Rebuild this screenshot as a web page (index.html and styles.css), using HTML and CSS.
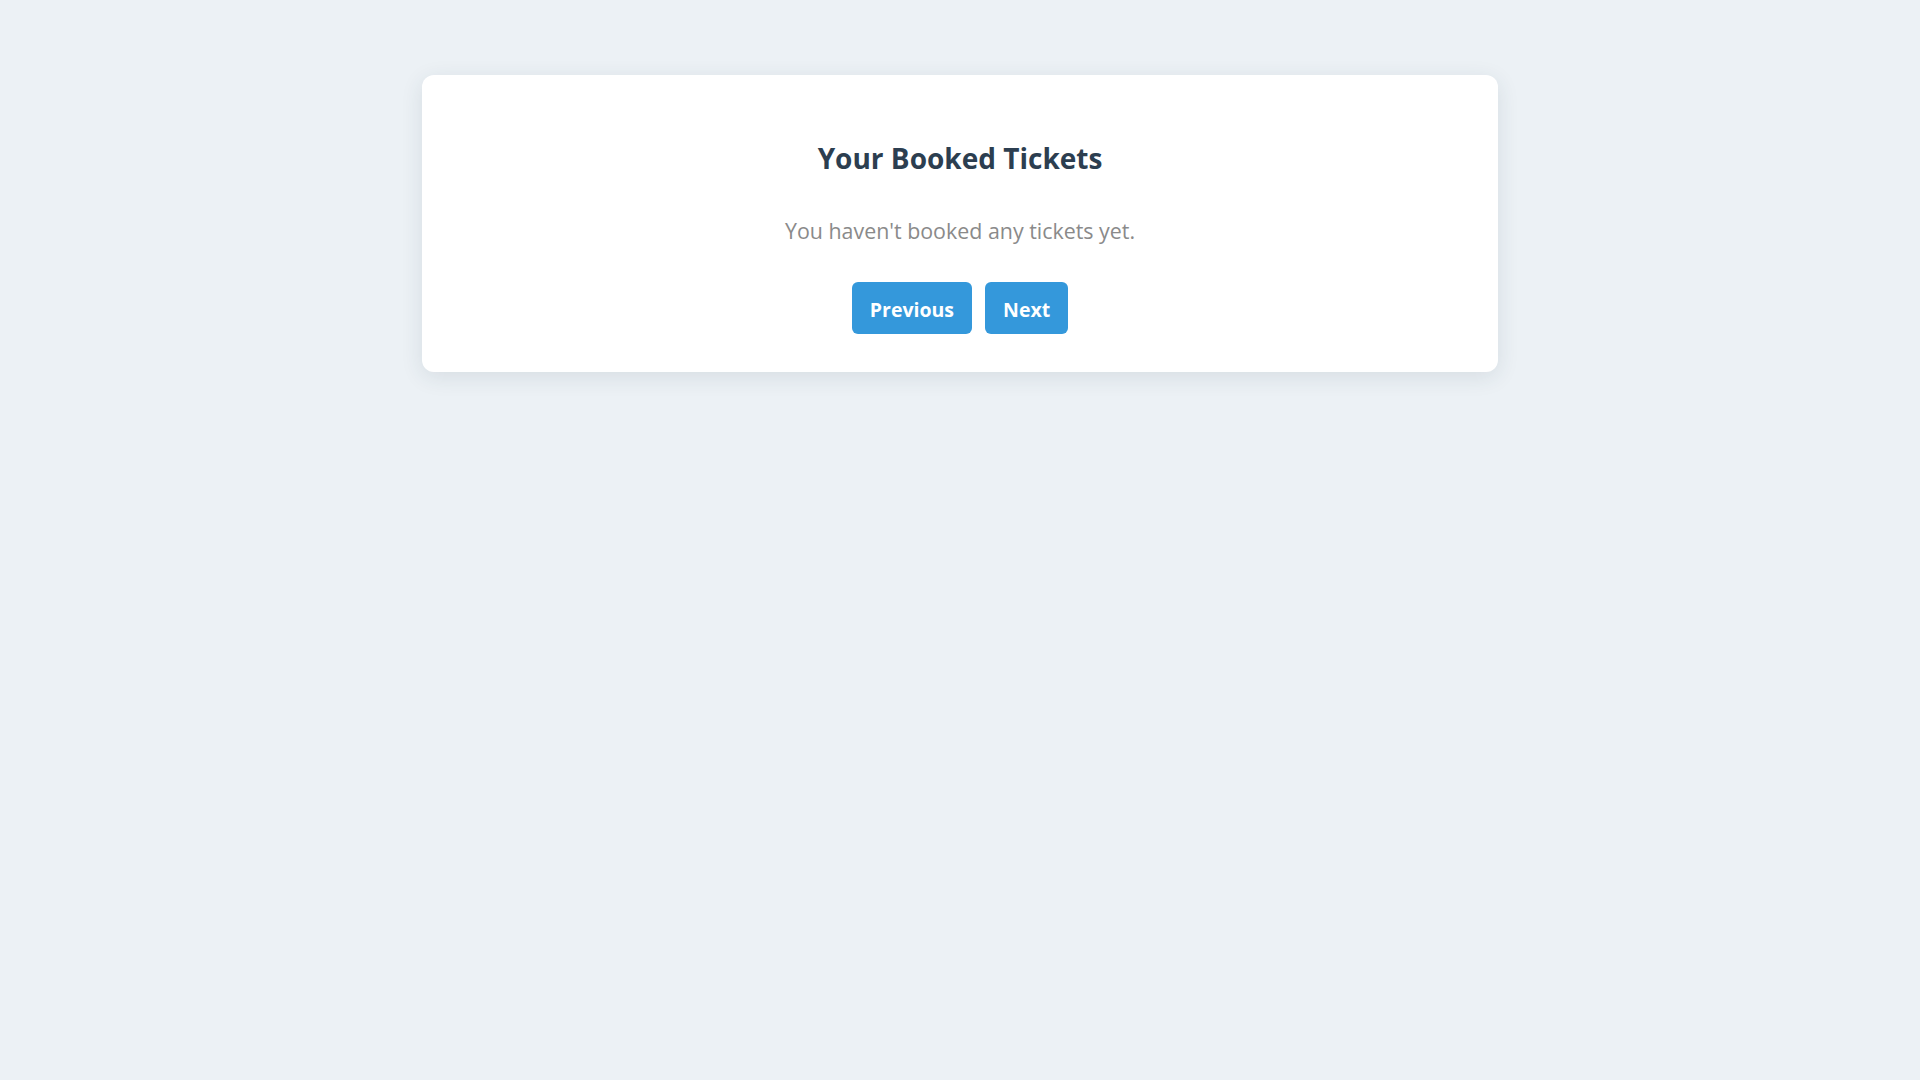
FILE: index.html
```html
<!DOCTYPE html>
<html lang="en">
<head>
<meta charset="UTF-8">
<title>Your Booked Tickets</title>
<link rel="stylesheet" href="styles.css">
</head>
<body>
<main class="card">
  <h2 class="title">Your Booked Tickets</h2>
  <p class="empty">You haven't booked any tickets yet.</p>
  <div class="pager">
    <button class="btn">Previous</button>
    <button class="btn">Next</button>
  </div>
</main>
</body>
</html>
```
FILE: styles.css
```css
html, body {
  margin: 0;
  padding: 0;
}
body {
  background: #ecf1f5;
  font-family: "Open Sans", "Noto Sans", sans-serif;
  min-height: 1080px;
  padding-top: 75px;
  box-sizing: border-box;
}
.card {
  width: 1076px;
  margin: 0 auto;
  box-sizing: border-box;
  background: #fff;
  border-radius: 12px;
  box-shadow: 0 5px 22px rgba(40, 60, 80, 0.11);
  padding: 63px 40px 38px;
  text-align: center;
}
.title {
  margin: 0;
  font-size: 28px;
  line-height: 40px;
  font-weight: 700;
  color: #2c3e50;
}
.empty {
  margin: 38px 0 0;
  font-size: 21.4px;
  line-height: 30px;
  color: #8a8a8a;
}
.pager {
  margin-top: 36px;
  display: flex;
  justify-content: center;
  gap: 13px;
}
.btn {
  border: none;
  background: #3498db;
  color: #fff;
  font-family: inherit;
  font-size: 19.5px;
  line-height: 28px;
  font-weight: 700;
  padding: 14px 18px 10px;
  border-radius: 6px;
  cursor: pointer;
}
```
